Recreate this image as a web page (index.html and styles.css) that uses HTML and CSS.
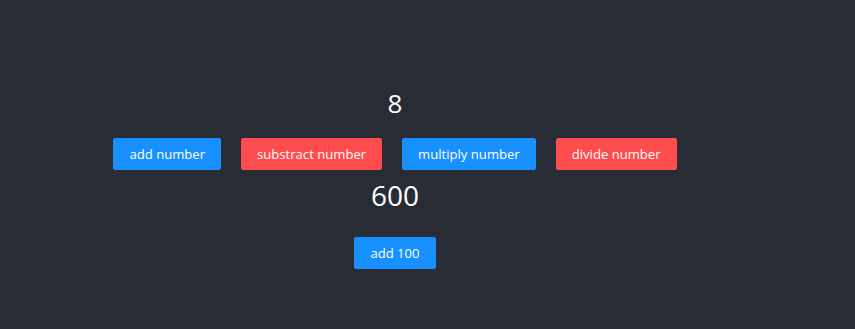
FILE: index.html
```html
<!DOCTYPE html>
<html lang="en">
<head>
    <meta charset="UTF-8">
    <meta name="viewport" content="width=device-width, initial-scale=1.0">
    <title>Counter</title>
    <link rel="stylesheet" href="styles.css">
</head>
<body>
    <div class="app">
        <div class="count">8</div>
        <div class="button-row">
            <button class="btn btn-primary">add number</button>
            <button class="btn btn-danger">substract number</button>
            <button class="btn btn-primary">multiply number</button>
            <button class="btn btn-danger">divide number</button>
        </div>
        <div class="total">600</div>
        <div class="button-row">
            <button class="btn btn-primary">add 100</button>
        </div>
    </div>
</body>
</html>
```

FILE: styles.css
```css
html, body {
    margin: 0;
    height: 100%;
    background: #282c34;
}
body {
    font-family: "Open Sans", "Noto Sans", sans-serif;
    color: #fff;
}
.app {
    width: 790px;
    padding-top: 86px;
    display: flex;
    flex-direction: column;
    align-items: center;
}
.count {
    font-size: 26px;
    line-height: 34px;
    margin-bottom: 18px;
}
.total {
    font-size: 28px;
    line-height: 36px;
    margin: 7px 0 24px;
}
.button-row {
    display: flex;
    gap: 20px;
}
.btn {
    height: 32px;
    padding: 4px 15px;
    font-family: inherit;
    font-size: 13.1px;
    line-height: 22px;
    color: #fff;
    border: 1px solid transparent;
    border-radius: 2px;
    cursor: pointer;
}
.btn-primary {
    background: #1890ff;
    border-color: #1890ff;
}
.btn-danger {
    background: #ff4d4f;
    border-color: #ff4d4f;
}
```
